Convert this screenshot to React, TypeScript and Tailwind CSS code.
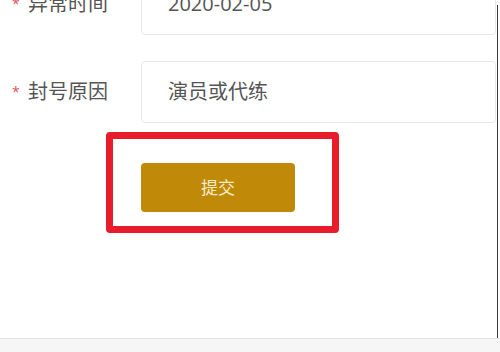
const font = { fontFamily: '"Open Sans", "Noto Sans CJK SC", sans-serif' }

function Row({ label, value }: { label: string; value: string }) {
  return (
    <div className="flex items-center h-[62px]">
      <div className="w-[141px] shrink-0 flex items-center pl-[12px] text-[20px] text-[#555]">
        <span className="text-[#e0505a] text-[14px] w-[16px] leading-none">*</span>
        <span>{label}</span>
      </div>
      <div className="flex-1 h-full flex items-center pl-[26px] border border-[#e8e8e8] rounded-[4px] text-[20px] text-[#555]">
        {value}
      </div>
    </div>
  )
}

export default function App() {
  return (
    <div className="w-[500px] h-[352px] overflow-hidden bg-white flex flex-col" style={font}>
      <div className="flex flex-1 min-h-0">
        <div className="w-[497px] pr-[1px] flex flex-col">
          <div className="mt-[-27px] flex flex-col gap-[26px]">
            <Row label="异常时间" value="2020-02-05" />
            <Row label="封号原因" value="演员或代练" />
          </div>
          <div className="mt-[9px] ml-[106px] w-[233px] h-[101px] border-[7px] border-[#e81c2a] rounded-[4px] pl-[28px] pt-[24px]">
            <button className="w-[154px] h-[49px] rounded-[4px] bg-[#c08a08] text-[#f7ecc8] text-[17px]">
              提交
            </button>
          </div>
        </div>
        <div className="w-[1px] mt-[5px] bg-[#3a3a3a]" />
      </div>
      <div className="h-[14px] border-t border-[#e4e4e4] bg-[#f6f6f6]" />
    </div>
  )
}
